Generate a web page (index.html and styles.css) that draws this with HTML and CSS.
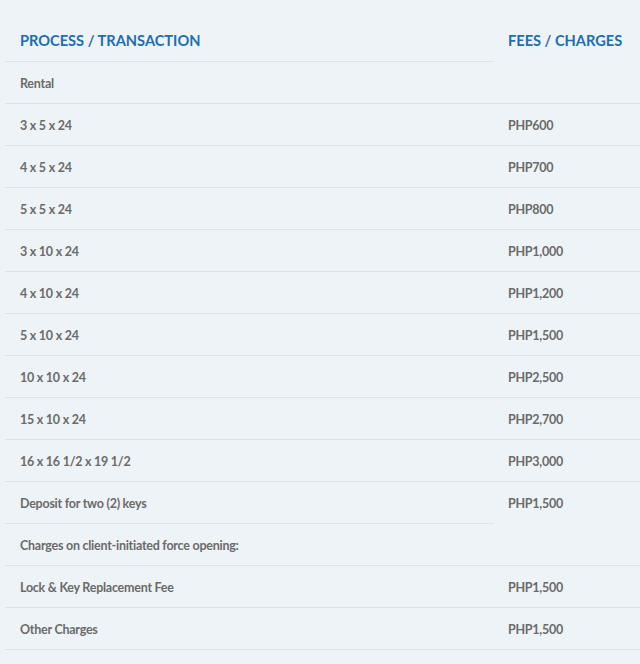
FILE: index.html
```html
<!DOCTYPE html>
<html lang="en">
<head>
<meta charset="utf-8">
<title>Fees</title>
<link rel="stylesheet" href="styles.css">
</head>
<body>
<div class="wrap">
<table class="fees">
  <thead>
    <tr>
      <th class="col-proc">PROCESS / TRANSACTION</th>
      <th class="col-fee nb">FEES / CHARGES</th>
    </tr>
  </thead>
  <tbody>
    <tr><td>Rental</td><td></td></tr>
    <tr><td>3 x 5 x 24</td><td>PHP600</td></tr>
    <tr><td>4 x 5 x 24</td><td>PHP700</td></tr>
    <tr><td>5 x 5 x 24</td><td>PHP800</td></tr>
    <tr><td>3 x 10 x 24</td><td>PHP1,000</td></tr>
    <tr><td>4 x 10 x 24</td><td>PHP1,200</td></tr>
    <tr><td>5 x 10 x 24</td><td>PHP1,500</td></tr>
    <tr><td>10 x 10 x 24</td><td>PHP2,500</td></tr>
    <tr><td>15 x 10 x 24</td><td>PHP2,700</td></tr>
    <tr><td>16 x 16 1/2 x 19 1/2</td><td>PHP3,000</td></tr>
    <tr><td>Deposit for two (2) keys</td><td class="nb">PHP1,500</td></tr>
    <tr><td>Charges on client-initiated force opening:</td><td></td></tr>
    <tr><td>Lock &amp; Key Replacement Fee</td><td>PHP1,500</td></tr>
    <tr><td>Other Charges</td><td>PHP1,500</td></tr>
  </tbody>
</table>
</div>
</body>
</html>
```
FILE: styles.css
```css
html, body {
  margin: 0;
  padding: 0;
  background: #eef3f7;
}
body {
  font-family: "Lato", "Liberation Sans", sans-serif;
  overflow: hidden;
}
.wrap {
  padding-left: 5px;
}
.fees {
  border-collapse: separate;
  border-spacing: 0;
  width: 640px;
}
.fees th {
  text-align: left;
  color: #1f6ead;
  font-weight: 700;
  font-size: 14.6px;
  line-height: 18px;
  padding: 32px 15px 11px 15px;
  border-bottom: 1px solid #dce3e9;
}
.fees .col-proc {
  width: 459px;
}
.fees td {
  color: #6b6b6b;
  font-weight: 700;
  font-size: 12.5px;
  letter-spacing: -0.25px;
  line-height: 17px;
  padding: 13px 15px 11px 15px;
  border-bottom: 1px solid #dce3e9;
  white-space: nowrap;
}
.fees td + td, .fees th + th {
  padding-left: 14px;
}
.fees .nb {
  border-bottom-color: transparent;
}
```
